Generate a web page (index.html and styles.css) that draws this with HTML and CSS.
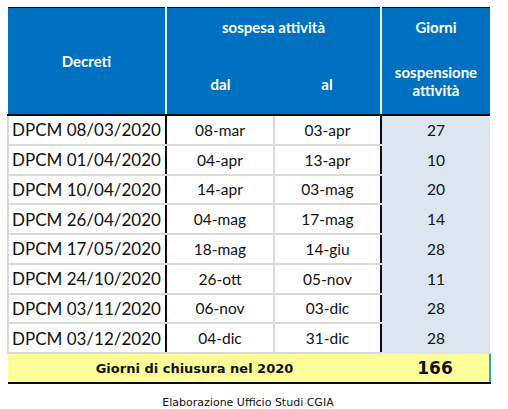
FILE: index.html
```html
<!DOCTYPE html>
<html lang="it">
<head>
<meta charset="utf-8">
<link rel="stylesheet" href="styles.css">
</head>
<body>
<div class="wrap">
<table class="tbl">
  <colgroup>
    <col class="c1"><col class="c2"><col class="c3"><col class="c4">
  </colgroup>
  <thead>
    <tr class="h1">
      <th rowspan="2" class="th-dec">Decreti</th>
      <th colspan="2" class="th-sosp">sospesa attività</th>
      <th class="th-giorni">Giorni</th>
    </tr>
    <tr class="h2">
      <th class="th-dal">dal</th>
      <th class="th-al">al</th>
      <th class="th-sosp2">sospensione<br>attività</th>
    </tr>
  </thead>
  <tbody>
    <tr><td class="dec">DPCM 08/03/2020</td><td class="d">08-mar</td><td class="a">03-apr</td><td class="g">27</td></tr>
    <tr><td class="dec">DPCM 01/04/2020</td><td class="d">04-apr</td><td class="a">13-apr</td><td class="g">10</td></tr>
    <tr><td class="dec">DPCM 10/04/2020</td><td class="d">14-apr</td><td class="a">03-mag</td><td class="g">20</td></tr>
    <tr><td class="dec">DPCM 26/04/2020</td><td class="d">04-mag</td><td class="a">17-mag</td><td class="g">14</td></tr>
    <tr><td class="dec">DPCM 17/05/2020</td><td class="d">18-mag</td><td class="a">14-giu</td><td class="g">28</td></tr>
    <tr><td class="dec">DPCM 24/10/2020</td><td class="d">26-ott</td><td class="a">05-nov</td><td class="g">11</td></tr>
    <tr><td class="dec">DPCM 03/11/2020</td><td class="d">06-nov</td><td class="a">03-dic</td><td class="g">28</td></tr>
    <tr><td class="dec">DPCM 03/12/2020</td><td class="d">04-dic</td><td class="a">31-dic</td><td class="g">28</td></tr>
  </tbody>
  <tfoot>
    <tr class="tot">
      <td colspan="3" class="tot-l">Giorni di chiusura nel 2020</td>
      <td class="tot-n">166</td>
    </tr>
  </tfoot>
</table>
<p class="src">Elaborazione Ufficio Studi CGIA</p>
</div>
</body>
</html>
```

FILE: styles.css
```css
html, body {
  margin: 0;
  padding: 0;
  background: #ffffff;
}
.wrap {
  padding: 7px 0 0 7px;
  width: 482px;
}
.tbl {
  border-collapse: collapse;
  table-layout: fixed;
  width: 482px;
  font-family: "Lato", "DejaVu Sans", sans-serif;
}
.c1 { width: 158px; }
.c2 { width: 108px; }
.c3 { width: 107px; }
.c4 { width: 109px; }

thead th {
  background: #0070c0;
  color: #ffffff;
  font-weight: bold;
  font-size: 15px;
  padding: 0;
  border-top: 1px solid #0a0a0a;
  border-bottom: 2px solid #0a0a0a;
  vertical-align: middle;
}
.h1 th { height: 38px; padding-bottom: 3px; border-bottom: none; }
.h2 th { height: 61px; padding-top: 4px; border-top: none; }
.th-dec { border-right: 2px solid #e8f4ff; padding: 0 !important; border-bottom: 2px solid #0a0a0a !important; }
.th-giorni { border-left: 2px solid #e8f4ff; }
.th-sosp2 { border-left: 2px solid #e8f4ff; line-height: 18px; padding-top: 0 !important; padding-bottom: 2px !important; }

tbody td {
  height: 27.75px;
  padding: 0;
  font-size: 16px;
  color: #111111;
  border-top: 2px solid #dadada;
  border-bottom: 2px solid #dadada;
  text-align: center;
}
tbody tr:first-child td { border-top: none; }
tbody td.dec {
  text-align: left;
  padding-left: 3px;
  font-size: 17px;
  border-left: 2px solid #dadada;
  border-right: 2px solid #0a0a0a;
}
tbody td.d { font-size: 15.5px; border-right: 2px solid #dadada; }
tbody td.a { font-size: 15.5px; border-right: 2px solid #0a0a0a; }
tbody td.g {
  font-size: 15.5px;
  background: #dce6f1;
  border-top-color: #dce6f1;
  border-bottom-color: #dce6f1;
}

.tot td {
  background: #ffff99;
  border-top: 2px solid #0a0a0a;
  border-bottom: 2px solid #0a0a0a;
  height: 28px;
  padding: 0;
  font-family: "DejaVu Sans", sans-serif;
  font-weight: bold;
  color: #111111;
}
.tot-l { text-align: center; font-size: 13px; }
.tot-n { text-align: center; font-size: 17px; border-right: 2px solid #2a9fd8; }

.src {
  margin: 12px 0 0 0;
  text-align: center;
  font-family: "DejaVu Sans", sans-serif;
  font-size: 11px;
  color: #111111;
}
```
